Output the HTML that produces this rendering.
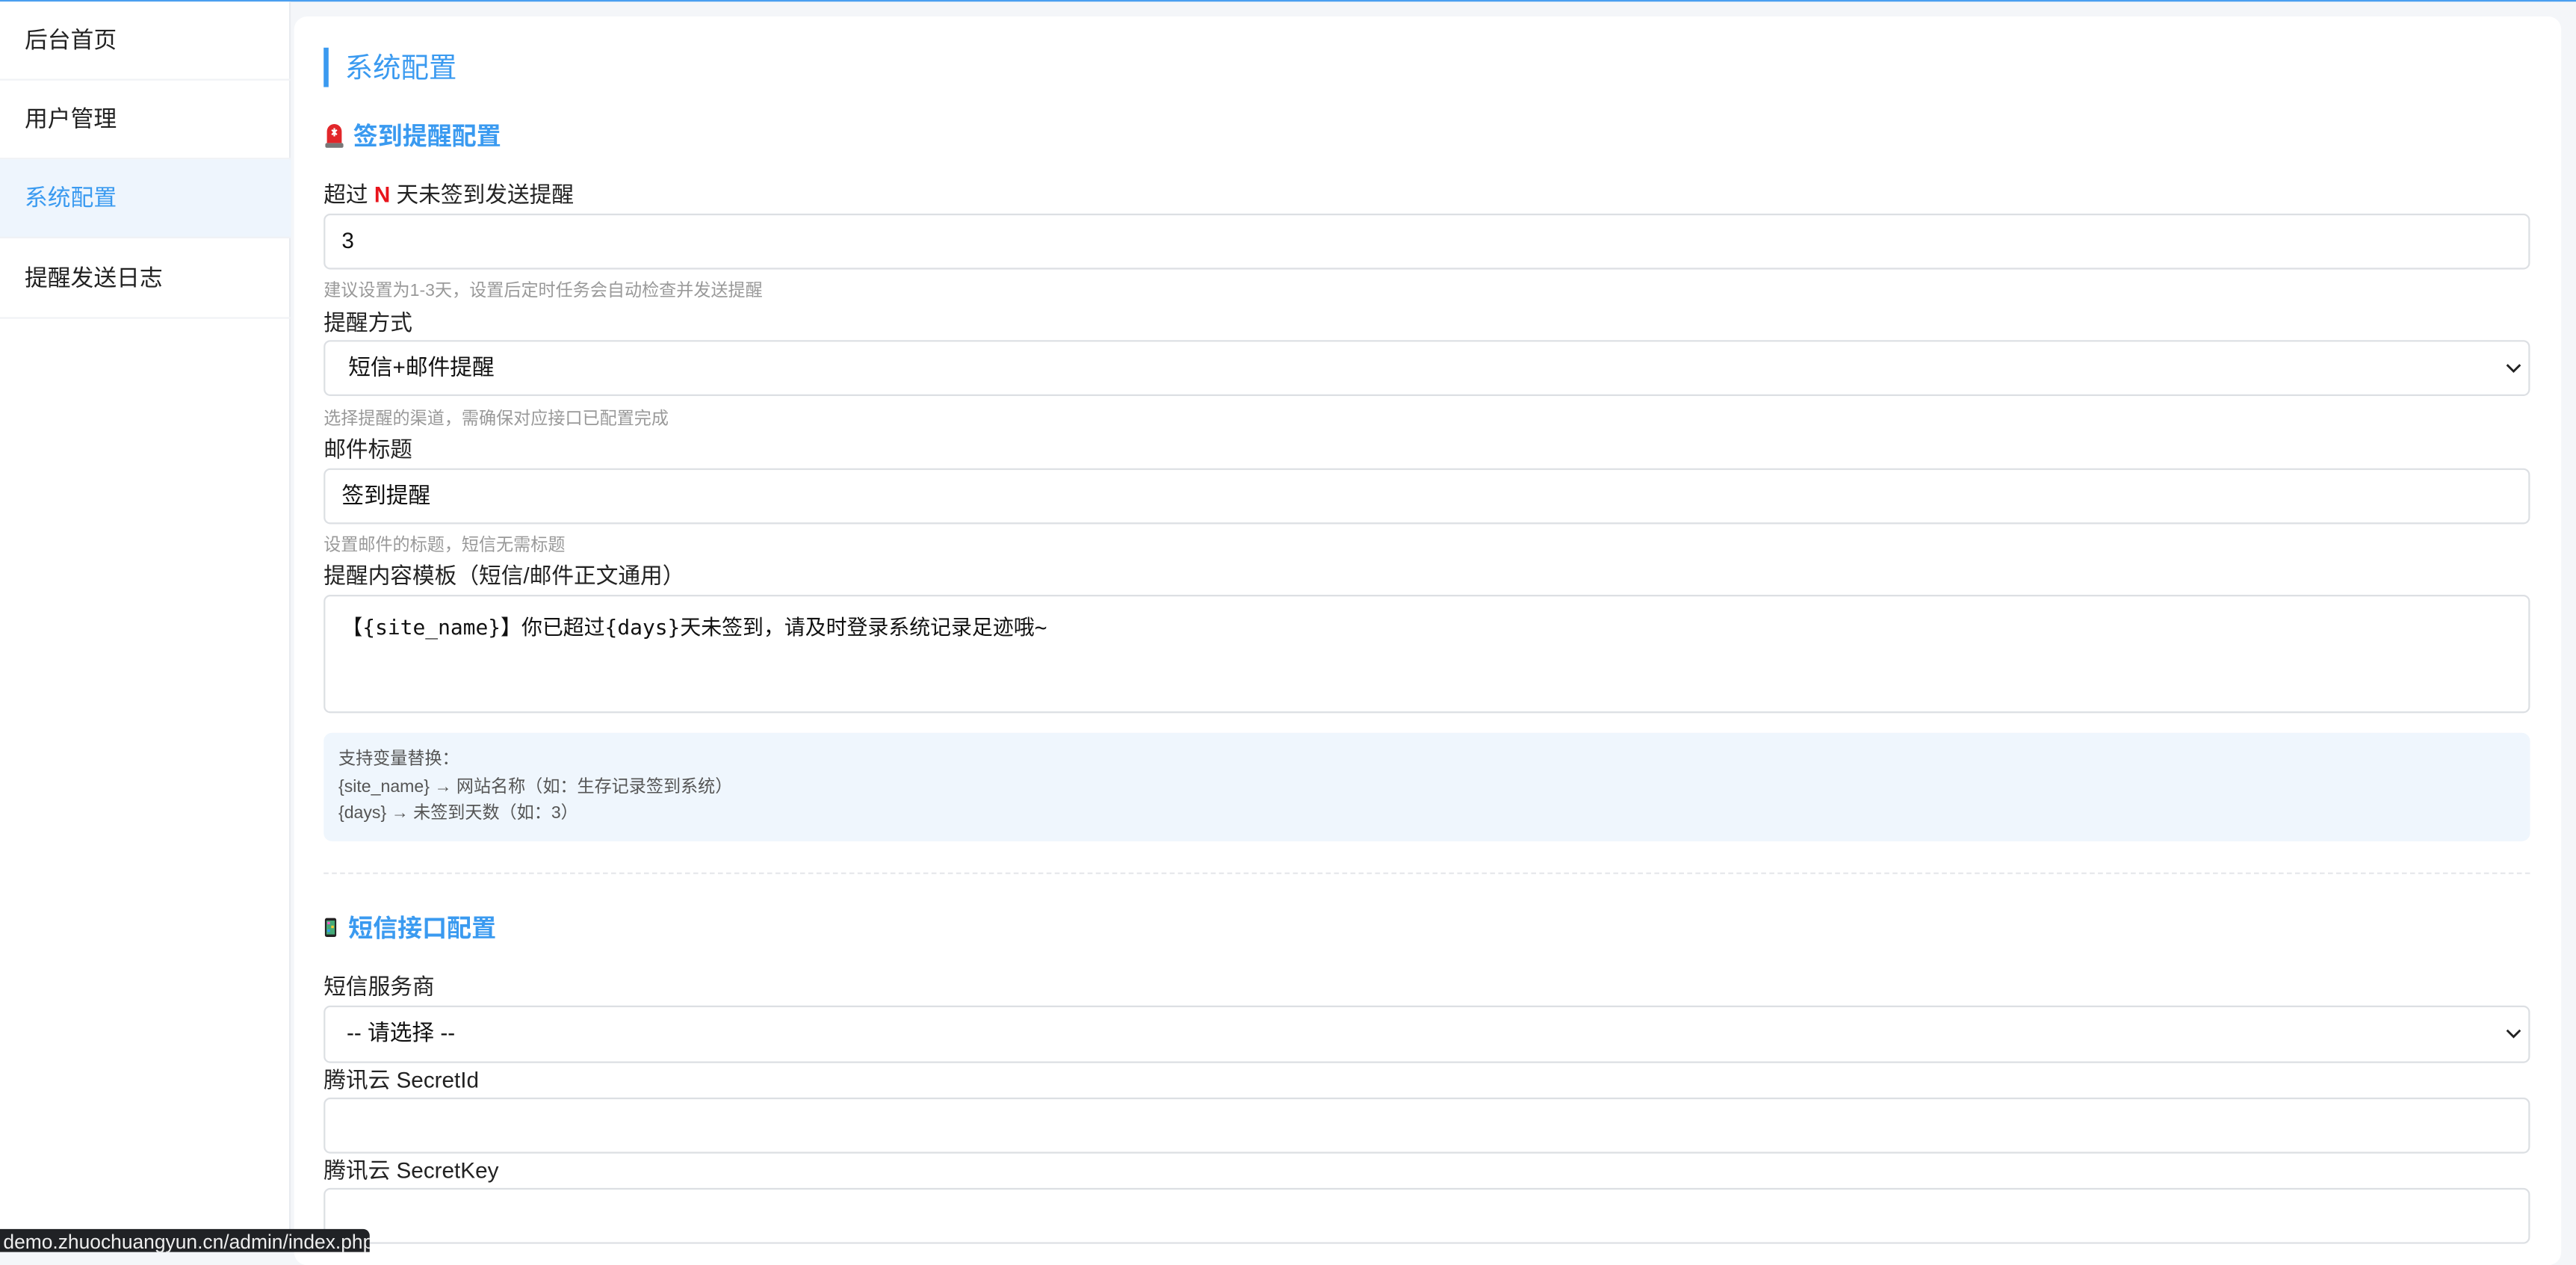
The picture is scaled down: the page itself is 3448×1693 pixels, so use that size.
<!DOCTYPE html>
<html><head><meta charset="utf-8"><style>
*{margin:0;padding:0;box-sizing:border-box}
html,body{width:3448px;height:1672px;overflow:hidden;background:#f4f6f9}
#w{position:absolute;left:0;top:0;width:1568px;height:760px;transform:scale(2.199);transform-origin:0 0;font-family:"Liberation Sans","Noto Sans CJK SC",sans-serif;color:#222;background:#f4f6f9}
.topline{position:absolute;left:0;top:0;width:1568px;height:1px;background:#4a9ff0}
.side{position:absolute;left:0;top:1px;width:177px;height:759px;background:#fff;border-right:1px solid #e8ebef}
.it{position:absolute;left:0;width:177px;height:48px;border-bottom:1px solid #f0f2f5;font-size:14px;line-height:46px;padding-left:15px;color:#222}
.it.a{background:#eef5fd;color:#3a9af0}
.card{position:absolute;left:179px;top:10px;width:1380px;height:760px;background:#fff;border-radius:8px}
.a1{position:absolute}
.ttl{left:197px;top:29px;height:24px;border-left:3px solid #3a9af0;padding-left:10px;font-size:17px;line-height:25px;color:#3a9af0}
.sec{left:197px;font-size:15px;font-weight:bold;color:#3a9af0;line-height:20px}
.lbl{left:197px;font-size:13.5px;line-height:18px;color:#222}
.inp{left:197px;width:1343px;height:34px;border:1px solid #dcdfe3;border-radius:4px;background:#fff;font-size:13.5px;line-height:32px;padding-left:10px;color:#111}
.hint{left:197px;font-size:10.5px;color:#999;line-height:14px}
.chev{position:absolute;right:4px;top:12px}
.em{display:inline-block;width:13px;height:15px;vertical-align:-2px;margin-right:5px}
</style></head><body><div id="w">
<div class="topline"></div>
<div class="side">
<div class="it" style="top:0">后台首页</div>
<div class="it" style="top:48px">用户管理</div>
<div class="it a" style="top:96px">系统配置</div>
<div class="it" style="top:145px">提醒发送日志</div>
</div>
<div class="card"></div>
<div class="a1 ttl">系统配置</div>
<div class="a1 sec" style="top:74px"><svg class="em" viewBox="0 0 13 15"><rect x="1" y="12" width="11" height="3" rx="1" fill="#777"/><path d="M2 12 V5 a4.5 4.5 0 0 1 9 0 V12 Z" fill="#e2262a"/><path d="M5 4 l3 3 M8 4 l-3 3 M6.5 3 v5" stroke="#fff" stroke-width="1"/></svg>签到提醒配置</div>
<div class="a1 lbl" style="top:110px">超过 <b style="color:#e8141c">N</b> 天未签到发送提醒</div>
<div class="a1 inp" style="top:130px">3</div>
<div class="a1 hint" style="top:170px">建议设置为1-3天，设置后定时任务会自动检查并发送提醒</div>
<div class="a1 lbl" style="top:188px">提醒方式</div>
<div class="a1 inp" style="top:207px;padding-left:14px">短信+邮件提醒<svg class="chev" width="10" height="8" viewBox="0 0 10 8"><path d="M1 2 l4 4 l4 -4" fill="none" stroke="#222" stroke-width="1.3"/></svg></div>
<div class="a1 hint" style="top:248px">选择提醒的渠道，需确保对应接口已配置完成</div>
<div class="a1 lbl" style="top:265px">邮件标题</div>
<div class="a1 inp" style="top:285px">签到提醒</div>
<div class="a1 hint" style="top:325px">设置邮件的标题，短信无需标题</div>
<div class="a1 lbl" style="top:342px">提醒内容模板（短信/邮件正文通用）</div>
<div class="a1 inp" style="top:362px;height:72px;font-family:'DejaVu Sans Mono','Noto Sans CJK SC',monospace;font-size:12.7px;line-height:20px;padding-top:9px">【{site_name}】你已超过{days}天未签到，请及时登录系统记录足迹哦~</div>
<div class="a1" style="left:197px;top:446px;width:1343px;height:66px;background:#eff6fd;border-radius:5px;padding:8px 9px;font-size:10.5px;line-height:16.5px;color:#555">支持变量替换：<br>{site_name} → 网站名称（如：生存记录签到系统）<br>{days} → 未签到天数（如：3）</div>
<div class="a1" style="left:197px;top:531px;width:1343px;border-top:1px dashed #e6e8eb"></div>
<div class="a1 sec" style="top:556px"><svg class="em" viewBox="0 0 13 15" style="width:10px"><rect x="1" y="0" width="9" height="15" rx="1.5" fill="#222"/><rect x="2.2" y="2" width="6.6" height="11" fill="#4a7"/><rect x="3" y="3" width="2" height="2" fill="#f5c"/><rect x="6" y="6" width="2" height="2" fill="#fc3"/><rect x="3" y="9" width="2" height="2" fill="#39f"/></svg>短信接口配置</div>
<div class="a1 lbl" style="top:592px">短信服务商</div>
<div class="a1 inp" style="top:612px;height:35px;padding-left:13px">-- 请选择 --<svg class="chev" width="10" height="8" viewBox="0 0 10 8"><path d="M1 2 l4 4 l4 -4" fill="none" stroke="#222" stroke-width="1.3"/></svg></div>
<div class="a1 lbl" style="top:649px">腾讯云 SecretId</div>
<div class="a1 inp" style="top:668px"></div>
<div class="a1 lbl" style="top:704px">腾讯云 SecretKey</div>
<div class="a1 inp" style="top:723px"></div>
<div class="a1" style="left:0;top:748px;width:225px;height:14px;background:#202225;border-radius:0 4px 0 0;color:#eee;font-size:12px;line-height:17px;padding-left:2px;overflow:hidden">demo.zhuochuangyun.cn/admin/index.php</div>
</div></body></html>
